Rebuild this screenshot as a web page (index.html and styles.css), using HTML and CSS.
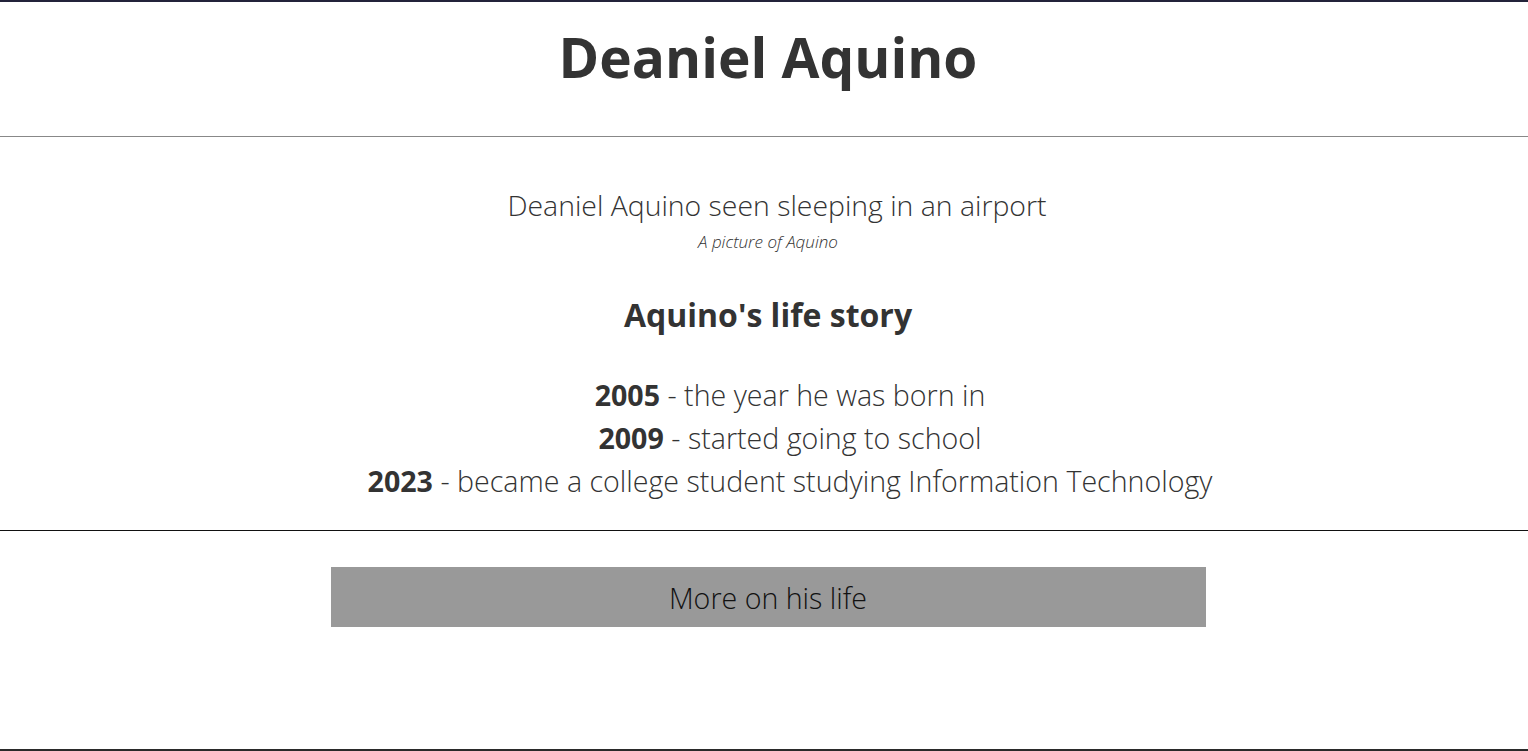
FILE: index.html
```html
<!DOCTYPE html>
<html lang="en">
<head>
<meta charset="utf-8">
<title>Deaniel Aquino</title>
<link rel="stylesheet" href="styles.css">
</head>
<body>
<div class="page">
  <header class="header">
    <h1 class="title">Deaniel Aquino</h1>
  </header>
  <main class="main">
    <figure class="figure">
      <p class="alt">Deaniel Aquino seen sleeping in an airport</p>
      <figcaption class="caption">A picture of Aquino</figcaption>
    </figure>
    <section class="story">
      <h2 class="story-title">Aquino's life story</h2>
      <ul class="timeline">
        <li><strong>2005</strong> - the year he was born in</li>
        <li><strong>2009</strong> - started going to school</li>
        <li><strong>2023</strong> - became a college student studying Information Technology</li>
      </ul>
    </section>
  </main>
  <div class="more">
    <a class="more-btn" href="#">More on his life</a>
  </div>
</div>
</body>
</html>
```
FILE: styles.css
```css
* { box-sizing: border-box; }
html, body { margin: 0; padding: 0; background: #fff; }
body {
  font-family: "Open Sans", "Noto Sans", sans-serif;
  color: #333;
}
.page {
  height: 751px;
  border-top: 2px solid #23233a;
  border-bottom: 2px solid #2a2a2a;
  padding-left: 8px;
  display: flex;
  flex-direction: column;
}
.header {
  padding: 15px 0 39px;
  border-bottom: 1px solid #888;
  margin-left: -8px;
  padding-left: 8px;
}
.title {
  margin: 0;
  text-align: center;
  font-size: 55px;
  line-height: 80px;
  font-weight: 700;
  color: #333;
}
.main {
  padding-top: 49px;
  padding-bottom: 28px;
  border-bottom: 1px solid #111;
  margin-left: -8px;
  padding-left: 8px;
}
.figure { margin: 0; text-align: center; }
.alt {
  margin: 0;
  font-size: 28.4px;
  line-height: 38px;
  font-weight: 300;
  padding-left: 18px;
}
.caption {
  margin-top: 7px;
  font-size: 17px;
  line-height: 22px;
  font-style: italic;
  font-weight: 300;
}
.story { text-align: center; }
.story-title {
  margin: 40px 0 0;
  font-size: 32px;
  line-height: 44px;
  font-weight: 700;
}
.timeline {
  list-style: none;
  margin: 36px 0 0;
  padding: 0 0 0 44px;
  font-size: 28.6px;
  line-height: 43px;
  font-weight: 300;
}
.timeline strong { font-weight: 700; }
.more {
  display: flex;
  justify-content: center;
  padding-top: 36px;
}
.more-btn {
  width: 875px;
  height: 60px;
  background: #999;
  color: #111;
  text-decoration: none;
  font-size: 28.6px;
  font-weight: 300;
  display: flex;
  align-items: center;
  justify-content: center;
}
```
